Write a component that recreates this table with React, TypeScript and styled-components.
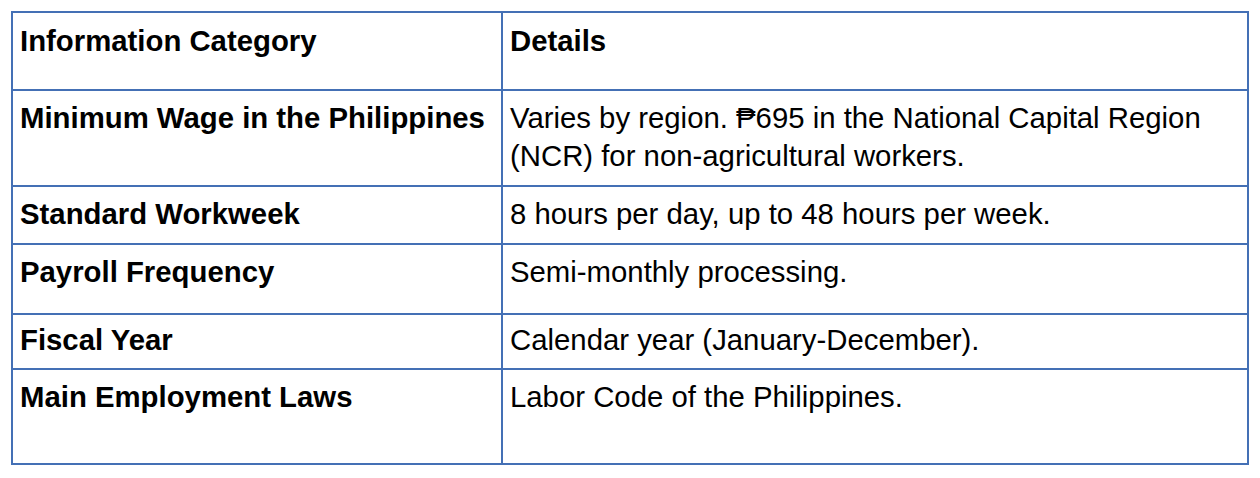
import React from "react";
import styled, { createGlobalStyle } from "styled-components";

const GlobalStyle = createGlobalStyle`
  html, body {
    margin: 0;
    padding: 0;
    background: #ffffff;
  }
  body {
    font-family: "Liberation Sans", Arial, Helvetica, sans-serif;
    color: #000000;
  }
`;

const Page = styled.div`
  padding: 11px;
`;

const Table = styled.div`
  display: grid;
  grid-template-columns: 490px 746px;
  width: 1238px;
  border-top: 2px solid #4470b5;
  border-left: 2px solid #4470b5;
  box-sizing: border-box;
`;

const Cell = styled.div<{ $bold?: boolean; $h: number; $pt?: number }>`
  box-sizing: border-box;
  height: ${(p) => p.$h}px;
  padding: ${(p) => p.$pt ?? 8}px 7px 0 7px;
  border-right: 2px solid #4470b5;
  border-bottom: 2px solid #4470b5;
  font-size: 29.33px;
  line-height: 38px;
  font-weight: ${(p) => (p.$bold ? 700 : 400)};
  overflow: hidden;
`;

type Row = { label: string; detail: string; h: number; pt?: number; header?: boolean };

const rows: Row[] = [
  { label: "Information Category", detail: "Details", h: 78, pt: 9, header: true },
  {
    label: "Minimum Wage in the Philippines",
    detail:
      "Varies by region. ₱695 in the National Capital Region (NCR) for non-agricultural workers.",
    h: 96,
  },
  { label: "Standard Workweek", detail: "8 hours per day, up to 48 hours per week.", h: 58 },
  { label: "Payroll Frequency", detail: "Semi-monthly processing.", h: 70 },
  { label: "Fiscal Year", detail: "Calendar year (January-December).", h: 55, pt: 6 },
  { label: "Main Employment Laws", detail: "Labor Code of the Philippines.", h: 95 },
];

export default function App() {
  return (
    <>
      <GlobalStyle />
      <Page>
        <Table role="table">
          {rows.map((r) => (
            <React.Fragment key={r.label}>
              <Cell $bold $h={r.h} $pt={r.pt} role={r.header ? "columnheader" : "cell"}>
                {r.label}
              </Cell>
              <Cell $bold={r.header} $h={r.h} $pt={r.pt} role={r.header ? "columnheader" : "cell"}>
                {r.detail}
              </Cell>
            </React.Fragment>
          ))}
        </Table>
      </Page>
    </>
  );
}
